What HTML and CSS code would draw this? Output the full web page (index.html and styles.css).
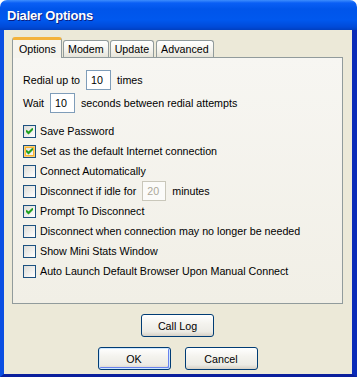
FILE: index.html
```html
<!DOCTYPE html>
<html lang="en">
<head>
    <meta charset="UTF-8">
    <title>Dialer Options</title>
    <link rel="stylesheet" href="styles.css">
</head>
<body>
    <div class="window">
        <div class="titlebar">Dialer Options</div>
        <div class="client">
            <div class="tabs">
                <div class="tab selected">Options</div>
                <div class="tab">Modem</div>
                <div class="tab">Update</div>
                <div class="tab advanced">Advanced</div>
            </div><!-- tabs -->
            <div class="panel">
                <div class="row">
                    <span>Redial up to</span>
                    <span class="field">10</span>
                    <span>times</span>
                </div>
                <div class="row second">
                    <span>Wait</span>
                    <span class="field">10</span>
                    <span>seconds between redial attempts</span>
                </div>
                <div class="checks">
                    <div class="check"><span class="box checked"><svg width="7" height="7" viewBox="0 0 7 7"><path d="M0 2.5 L2.5 5 L7 0.5" fill="none" stroke="#21a121" stroke-width="2"/></svg></span>Save Password</div>
                    <div class="check"><span class="box checked hover"><svg width="7" height="7" viewBox="0 0 7 7"><path d="M0 2.5 L2.5 5 L7 0.5" fill="none" stroke="#21a121" stroke-width="2"/></svg></span>Set as the default Internet connection</div>
                    <div class="check"><span class="box"></span>Connect Automatically</div>
                    <div class="check"><span class="box"></span>Disconnect if idle for<span class="field disabled">20</span>minutes</div>
                    <div class="check"><span class="box checked"><svg width="7" height="7" viewBox="0 0 7 7"><path d="M0 2.5 L2.5 5 L7 0.5" fill="none" stroke="#21a121" stroke-width="2"/></svg></span>Prompt To Disconnect</div>
                    <div class="check"><span class="box"></span>Disconnect when connection may no longer be needed</div>
                    <div class="check"><span class="box"></span>Show Mini Stats Window</div>
                    <div class="check"><span class="box"></span>Auto Launch Default Browser Upon Manual Connect</div>
                </div><!-- checks -->
            </div><!-- panel -->
            <div class="buttons">
                <button class="btn">Call Log</button>
                <div class="pair">
                    <button class="btn default">OK</button>
                    <button class="btn">Cancel</button>
                </div>
            </div><!-- buttons -->
        </div><!-- client -->
    </div><!-- window -->
</body>
</html>
```

FILE: styles.css
```css
body {
    margin: 0;
    background: #fff;
    font-family: "Liberation Sans", Arial, sans-serif;
    font-size: 10.7px;
    color: #000;
}
.window {
    width: 357px;
    height: 377px;
    display: flex;
    flex-direction: column;
}
.titlebar {
    height: 30px;
    flex: none;
    box-sizing: border-box;
    padding: 8px 0 0 7px;
    border-radius: 7px 7px 0 0;
    background: linear-gradient(#3d8dfd 0, #0a5ff5 3px, #0055ea 9px, #0058ee 20px, #004ad8 27px, #003fc0 30px);
    color: #fff;
    font-family: "Liberation Sans", sans-serif;
    font-weight: bold;
    font-size: 13px;
    letter-spacing: -0.2px;
    text-shadow: 1px 1px #0a1e80;
}
.client {
    flex: 1;
    background: #ece9d8;
    border-left: 4px solid #0a4ee2;
    border-right: 5px solid #0a2bb8;
    border-bottom: 3px solid #0a1f9c;
    padding: 7px 9px 0 8px;
    display: flex;
    flex-direction: column;
}
.tabs {
    display: flex;
    align-items: flex-end;
    height: 20px;
}
.tab {
    height: 17px;
    box-sizing: border-box;
    padding: 2px 4px 0;
    margin-left: 1px;
    border: 1px solid #919b9c;
    border-bottom: none;
    border-radius: 3px 3px 0 0;
    background: linear-gradient(#fff, #f3f2ec 60%, #e6e4d9);
}
.tab.advanced {
    margin-left: 2px;
}
.tab.selected {
    height: 21px;
    margin-left: 0;
    margin-bottom: -1px;
    padding: 3px 6px 0 6px;
    width: 50px;
    border-top: 3px solid #f3b23c;
    background: #f5f4ee;
    position: relative;
    z-index: 1;
}
.panel {
    height: 247px;
    box-sizing: border-box;
    border: 1px solid #919b9c;
    background: linear-gradient(#f7f6f2, #f1efe6);
    padding: 12px 10px 0;
}
.row {
    display: flex;
    align-items: center;
    height: 20px;
}
.row.second {
    margin-top: 3px;
}
.field {
    width: 25px;
    height: 20px;
    box-sizing: border-box;
    border: 1px solid #7f9db9;
    background: #fff;
    margin: 0 6px;
    padding: 3px 0 0 4px;
}
.field.disabled {
    width: 24px;
    border-color: #c9c7ba;
    color: #aca899;
    background: #fbfbf9;
}
.checks {
    margin-top: 8px;
}
.check {
    display: flex;
    align-items: center;
    height: 20px;
}
.box {
    width: 13px;
    height: 13px;
    box-sizing: border-box;
    border: 1px solid #1c5180;
    background: linear-gradient(135deg, #dcdcd7, #fff);
    margin-right: 4px;
    display: flex;
    align-items: center;
    justify-content: center;
}
.box.hover {
    box-shadow: inset 0 0 0 1px #fed175, inset 0 0 0 2px #f8b636;
}
.buttons {
    display: flex;
    flex-direction: column;
    align-items: center;
    gap: 10px;
    padding-top: 10px;
}
.pair {
    display: flex;
    gap: 14px;
}
.btn {
    width: 73px;
    height: 23px;
    padding: 0;
    border: 1px solid #003c74;
    border-radius: 3px;
    background: linear-gradient(#fff, #f4f3ee 40%, #ecebe5 80%, #d6d0c5);
    font-family: "Liberation Sans", Arial, sans-serif;
    font-size: 10.7px;
    color: #000;
}
.btn.default {
    box-shadow: inset 0 0 0 1px #cee7ff, inset -1px -1px 0 1px #6982ee;
}
```
